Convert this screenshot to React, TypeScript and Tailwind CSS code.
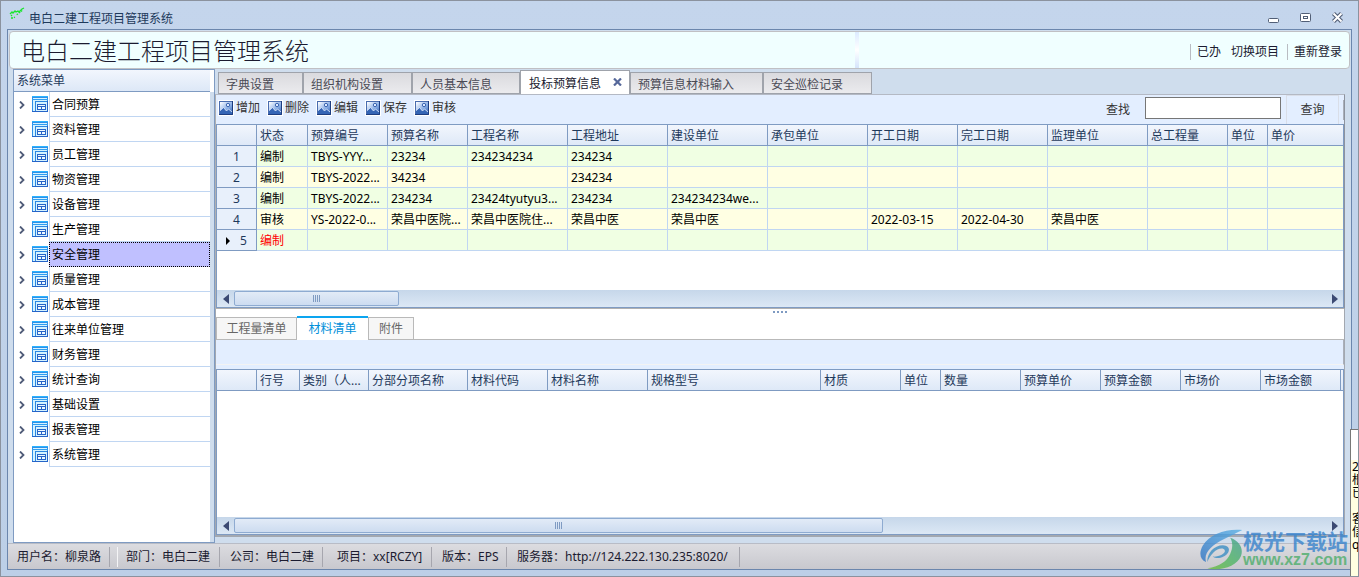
import React from "react";

type Col = { name: string; width: string };

const menu = [
  "合同预算", "资料管理", "员工管理", "物资管理", "设备管理", "生产管理", "安全管理", "质量管理",
  "成本管理", "往来单位管理", "财务管理", "统计查询", "基础设置", "报表管理", "系统管理",
];

const tabs = [
  { name: "字典设置", width: "w-[85px]" },
  { name: "组织机构设置", width: "w-[109px]" },
  { name: "人员基本信息", width: "w-[108px]" },
  { name: "投标预算信息", width: "w-[110px]", active: true },
  { name: "预算信息材料输入", width: "w-[133px]" },
  { name: "安全巡检记录", width: "w-[109px]" },
];

const actions = ["增加", "删除", "编辑", "保存", "审核"];

const budgetCols: Col[] = [
  { name: "", width: "w-10" },
  { name: "状态", width: "w-[51px]" },
  { name: "预算编号", width: "w-20" },
  { name: "预算名称", width: "w-20" },
  { name: "工程名称", width: "w-[100px]" },
  { name: "工程地址", width: "w-[100px]" },
  { name: "建设单位", width: "w-[100px]" },
  { name: "承包单位", width: "w-[100px]" },
  { name: "开工日期", width: "w-[90px]" },
  { name: "完工日期", width: "w-[90px]" },
  { name: "监理单位", width: "w-[100px]" },
  { name: "总工程量", width: "w-20" },
  { name: "单位", width: "w-10" },
  { name: "单价", width: "w-auto" },
];

const budgetRows: string[][] = [
  ["编制", "TBYS-YYY...", "23234", "234234234", "234234", "", "", "", "", "", "", "", ""],
  ["编制", "TBYS-2022...", "34234", "", "234234", "", "", "", "", "", "", "", ""],
  ["编制", "TBYS-2022...", "234234", "23424tyutyu3...", "234234", "234234234we...", "", "", "", "", "", "", ""],
  ["审核", "YS-2022-0...", "荣昌中医院...", "荣昌中医院住...", "荣昌中医", "荣昌中医", "", "2022-03-15", "2022-04-30", "荣昌中医", "", "", ""],
  ["编制", "", "", "", "", "", "", "", "", "", "", "", ""],
];

const materialCols: Col[] = [
  { name: "", width: "w-10" },
  { name: "行号", width: "w-[43px]" },
  { name: "类别（人...", width: "w-[69px]" },
  { name: "分部分项名称", width: "w-[99px]" },
  { name: "材料代码", width: "w-20" },
  { name: "材料名称", width: "w-[100px]" },
  { name: "规格型号", width: "w-[173px]" },
  { name: "材质", width: "w-20" },
  { name: "单位", width: "w-10" },
  { name: "数量", width: "w-20" },
  { name: "预算单价", width: "w-20" },
  { name: "预算金额", width: "w-20" },
  { name: "市场价", width: "w-20" },
  { name: "市场金额", width: "w-20" },
  { name: "", width: "w-auto" },
];

function MenuIcon() {
  return (
    <svg className="block" width="16" height="16" viewBox="0 0 16 16" shapeRendering="crispEdges" aria-hidden="true">
      <rect x="0" y="0" width="16" height="16" fill="#2f8fe8" />
      <rect x="1" y="2" width="14" height="13" fill="#d5f3ff" />
      <rect x="0" y="0" width="16" height="1" fill="#29b4ff" />
      <rect x="0" y="3" width="16" height="1" fill="#2f9df0" />
      <rect x="3" y="5" width="13" height="11" fill="#2c86e0" />
      <rect x="4" y="6" width="11" height="9" fill="#d5f3ff" />
      <rect x="5" y="8" width="9" height="6" fill="#2664c8" />
      <rect x="6" y="9" width="7" height="1" fill="#eef9ff" />
      <rect x="6" y="11" width="3" height="2" fill="#eef9ff" />
      <rect x="10" y="11" width="3" height="2" fill="#eef9ff" />
      <rect x="0" y="15" width="16" height="1" fill="#2664c8" />
      <rect x="15" y="5" width="1" height="11" fill="#2664c8" />
    </svg>
  );
}

function PictureIcon() {
  return (
    <svg className="shrink-0" width="16" height="16" viewBox="0 0 16 16" aria-hidden="true">
      <defs>
        <linearGradient id="sky" x1="0" y1="0" x2="1" y2="1">
          <stop offset="0.1" stopColor="#f4f8ff" />
          <stop offset="0.55" stopColor="#8fb2e6" />
          <stop offset="1" stopColor="#2e5fb4" />
        </linearGradient>
      </defs>
      <rect width="16" height="16" fill="#fff" />
      <rect x="1.5" y="1.5" width="13" height="13" fill="url(#sky)" stroke="#4a6cae" />
      <path d="M2 11L5.500 7.500L8.500 11L10.500 9L14 12V14H2Z" fill="#3565b5" />
      <path d="M2 10.500L5.500 7.500L8.500 11L10.500 9L14 12" fill="none" stroke="#e8f0ff" strokeWidth="0.8" />
      <circle cx="10" cy="5" r="1.700" fill="#dce9ff" stroke="#2f59a8" strokeWidth="0.9" />
      <path d="M14.500 1V14.500H1" fill="none" stroke="#1d3d80" />
    </svg>
  );
}

function HeadRow({ cols }: { cols: Col[] }) {
  return (
    <thead>
      <tr className="h-[21px] bg-linear-to-b from-[#f2f6fd] to-[#dde8f7]">
        {cols.map((c, i) => (
          <th
            key={i}
            className={`${c.width} overflow-hidden border-r border-b border-[#7f9bc2] px-[3px] pt-0.5 text-left font-normal whitespace-nowrap text-[#1e395b] last:border-r-0`}
          >
            {c.name}
          </th>
        ))}
      </tr>
    </thead>
  );
}

function ScrollBar({ thumb }: { thumb: string }) {
  return (
    <div className="flex h-[17px] items-center bg-linear-to-b from-[#c6d7ea] to-[#dce8f5]">
      <button aria-label="向左滚动" className="flex w-[17px] justify-center">
        <svg width="6" height="10" viewBox="0 0 6 10"><path d="M6 0V10L0 5Z" fill="#3c4a73" /></svg>
      </button>
      <div className={`${thumb} flex h-[15px] items-center justify-center gap-px rounded-xs border border-[#8eabd1] bg-linear-to-b from-[#e2ebf7] to-[#cddcf0]`}>
        <i className="h-[7px] w-px bg-[#7f9bc2]" />
        <i className="h-[7px] w-px bg-[#7f9bc2]" />
        <i className="h-[7px] w-px bg-[#7f9bc2]" />
        <i className="h-[7px] w-px bg-[#7f9bc2]" />
      </div>
      <button aria-label="向右滚动" className="ml-auto flex w-[17px] justify-center">
        <svg width="6" height="10" viewBox="0 0 6 10"><path d="M0 0V10L6 5Z" fill="#3c4a73" /></svg>
      </button>
    </div>
  );
}

function TitleBar() {
  return (
    <div className="flex h-[28px] items-center pt-1.5 pr-2 pl-0.5 text-[#1e395b]">
      <svg className="-mt-2" width="16" height="14" viewBox="0 0 16 14" fill="none" stroke="#19e62c" strokeWidth="1.300" aria-hidden="true">
        <path d="M1 7L3 5L4 6L6 4L7 5L9 4L10 5L13 2L15 1" />
        <path d="M10 6L14 3M3 8L2 9M9 7L7 8" strokeDasharray="1.500 1" />
        <path d="M2 11H4L6 10" strokeDasharray="2 1" />
      </svg>
      <span className="ml-1 pt-px">电白二建工程项目管理系统</span>
      <div className="ml-auto flex items-center gap-5">
        <button aria-label="最小化">
          <svg className="block" width="12" height="12" viewBox="0 0 12 12"><rect x="0.500" y="6.500" width="10" height="4" rx="1" fill="#fff" stroke="#515e76" /></svg>
        </button>
        <button aria-label="最大化">
          <svg className="block" width="12" height="12" viewBox="0 0 12 12"><rect x="0.500" y="1.500" width="10" height="8" rx="1" fill="#fff" stroke="#515e76" /><rect x="3.500" y="4.500" width="4" height="2" fill="#fff" stroke="#515e76" /></svg>
        </button>
        <button aria-label="关闭">
          <svg className="block" width="12" height="12" viewBox="0 0 12 12"><path d="M1.500 1.500L9.500 9.500M9.500 1.500L1.500 9.500" stroke="#515e76" strokeWidth="4.200" /><path d="M1.500 1.500L9.500 9.500M9.500 1.500L1.500 9.500" stroke="#fff" strokeWidth="2" /></svg>
        </button>
      </div>
    </div>
  );
}

function Sidebar() {
  return (
    <nav className="ml-[5px] flex w-[202px] shrink-0 flex-col border border-[#7f9bc2] bg-white">
      <div className="mr-1 flex h-[22px] items-center border-b border-[#7f9bc2] bg-linear-to-b from-[#f2f6fd] to-[#dde8f7] pt-px pl-[3px] text-[#1e395b]">
        系统菜单
      </div>
      <ul className="flex-1 border-r-4 border-[#cfdded]">
        {menu.map((m) => {
          const selected = m === "安全管理";
          return (
            <li key={m}>
              <a href="#" className="flex h-[25px] items-center text-black">
                <svg className="ml-[5px]" width="6" height="8" viewBox="0 0 6 8" fill="none" stroke="#4f5b78" strokeWidth="1.800"><path d="M1 0.500L4.500 4L1 7.500" /></svg>
                <span className="ml-[7px] w-[17px] pb-px"><MenuIcon /></span>
                <span
                  className={
                    selected
                      ? "flex h-full flex-1 items-center border border-dotted border-black bg-[#c0c0ff] pt-px pl-0.5"
                      : "flex h-full flex-1 items-center border-b border-l border-[#c0d6f2] pt-0.5 pl-0.5"
                  }
                >
                  {m}
                </span>
              </a>
            </li>
          );
        })}
      </ul>
    </nav>
  );
}

function BudgetPanel() {
  return (
    <section className="border border-t-[#b4b9c4] border-r-[#8d939e] border-b-[#b0b0b0] border-l-[#b0b0b0] bg-white">
      <div className="flex h-[29px] items-center bg-[#e3eeff] pl-0.5 text-[#333]">
        <div className="flex gap-[7px] pb-1">
          {actions.map((a) => (
            <button key={a} className="flex w-[42px] items-center gap-0.5 whitespace-nowrap">
              <PictureIcon />
              {a}
            </button>
          ))}
        </div>
        <label htmlFor="find" className="ml-auto">查找</label>
        <input id="find" className="mb-1 ml-[15px] h-[22px] w-[136px] border border-[#767676] bg-white px-1 outline-none" />
        <button className="ml-[5px] h-full w-[53px] border-x border-t border-[#d9dee8]">查询</button>
        <i className="ml-1 h-5 w-px bg-[#a9afba]" />
      </div>
      <div className="border border-[#7f9bc2]">
        <div className="pb-[39px]">
          <table className="w-full table-fixed border-separate border-spacing-0">
            <HeadRow cols={budgetCols} />
            <tbody>
              {budgetRows.map((row, r) => (
                <tr key={r} className="h-[21px] odd:bg-[#f0ffe3] even:bg-[#ffffe3]">
                  <th scope="row" className="border-r border-b border-[#7f9bc2] bg-[#e8f0fb] px-0 pt-0.5 font-normal text-[#1e395b]">
                    <span className="flex items-center justify-center gap-2.5">
                      {r === 4 && <svg width="4" height="8" viewBox="0 0 4 8"><path d="M0 0V8L4 4Z" fill="#000" /></svg>}
                      {r + 1}
                    </span>
                  </th>
                  {row.map((cell, c) => (
                    <td
                      key={c}
                      className={`overflow-hidden border-r border-b border-[#c0d6f2] px-[3px] pt-0.5 whitespace-nowrap last:border-r-0 ${r === 4 ? "text-[#ff0000]" : "text-black"}`}
                    >
                      {cell}
                    </td>
                  ))}
                </tr>
              ))}
            </tbody>
          </table>
        </div>
        <ScrollBar thumb="w-[165px]" />
      </div>
    </section>
  );
}

function DetailPanel() {
  return (
    <section className="flex flex-1 flex-col border-r border-b-2 border-l border-[#a3a8b0] bg-white">
      <div className="flex h-[7px] items-start justify-center gap-0.5 pt-0.5">
        <i className="size-0.5 bg-[#7f9bc2]" />
        <i className="size-0.5 bg-[#7f9bc2]" />
        <i className="size-0.5 bg-[#7f9bc2]" />
        <i className="size-0.5 bg-[#7f9bc2]" />
      </div>
      <div role="tablist" className="flex h-6 items-end border-b border-[#b9b9b9] text-[#666]">
        <button role="tab" className="h-[22px] w-[81px] border border-b-0 border-[#b9b9b9] bg-[#f6f6f6] pt-px">工程量清单</button>
        <button role="tab" aria-selected="true" className="-mb-px h-6 w-[71px] border-t-2 border-[#0ca5f0] bg-white text-[#0090da]">材料清单</button>
        <button role="tab" className="h-[22px] w-[46px] border border-b-0 border-[#b9b9b9] bg-[#f6f6f6] pt-px">附件</button>
      </div>
      <div className="h-[29px] border-b-4 border-[#e3eeff] bg-[#e3eeff]">
        <div className="h-full border-r border-b border-[#f3f3f3] border-r-[#a9afba]" />
      </div>
      <div className="flex flex-1 flex-col border border-[#7f9bc2]">
        <div className="flex-1">
          <table className="w-full table-fixed border-separate border-spacing-0">
            <HeadRow cols={materialCols} />
          </table>
        </div>
        <ScrollBar thumb="w-[649px]" />
      </div>
    </section>
  );
}

function StatusItem({ children, className }: { children: React.ReactNode; className: string }) {
  return <span className={`${className} flex h-5 items-center border-r border-r-[#a6a6ae] whitespace-nowrap`}>{children}</span>;
}

function Watermark() {
  return (
    <div className="pointer-events-none absolute right-[10px] bottom-1.5 flex items-center opacity-80">
      <svg width="43" height="41" viewBox="28 80 128 122" aria-hidden="true">
        <defs>
          <linearGradient id="leaf" x1="1" y1="0" x2="0" y2="1">
            <stop offset="0" stopColor="#43a08f" />
            <stop offset="0.500" stopColor="#4fb567" />
            <stop offset="1" stopColor="#6cbf3c" />
          </linearGradient>
          <linearGradient id="sweep" x1="1" y1="0" x2="0" y2="1">
            <stop offset="0" stopColor="#5ab0e4" />
            <stop offset="1" stopColor="#2f74c4" />
          </linearGradient>
        </defs>
        <path d="M154 83C108 78 58 94 36 130C24 152 28 172 46 178C38 152 62 128 100 110C116 102 132 94 154 83Z" fill="url(#sweep)" />
        <path d="M118 106C146 116 158 138 150 160C138 190 92 206 50 197C88 192 108 176 118 154C126 136 126 120 118 106Z" fill="url(#leaf)" />
        <path d="M50 178C48 152 70 128 96 128C122 130 118 152 98 162C86 168 74 168 66 162C82 164 104 154 102 144C98 134 80 138 68 150C58 160 54 168 50 178Z" fill="#3c8fc4" />
      </svg>
      <div className="flex flex-col">
        <span className="font-['Noto_Sans_CJK_SC',sans-serif] text-[21px] leading-[20px] font-bold text-[#3a84cc]">极光下载站</span>
        <span className="font-['Liberation_Sans',sans-serif] text-[16px] leading-[20px] font-bold text-[#4fae6c]">www.xz7.com</span>
      </div>
    </div>
  );
}

function EdgeNote() {
  return (
    <div className="absolute right-0 bottom-0 h-[147px] w-2 overflow-hidden border-t border-l border-[#777] bg-[#ffffe1] text-black">
      <div className="h-[30px] bg-white" />
      <p className="w-20 pl-px text-[12px] leading-[13px]">
        2022<br />根据<br />已办<br /><br />客户<br />信息<br />qq
      </p>
    </div>
  );
}

export default function App() {
  return (
    <div className="relative flex min-h-screen flex-col overflow-hidden border border-[#8b929e] bg-linear-to-b from-[#c4d5ec] to-[#bccfe7] px-1.5 pb-1.5 font-['Noto_Sans','Noto_Sans_CJK_SC',sans-serif] text-[12px] leading-[16px]">
      <TitleBar />
      <div className="flex flex-1 flex-col border border-[#6b86ad] bg-[#cfdded]">
        <header className="mx-px mt-px flex h-[38px] items-center rounded-sm border border-[#c0c0c4] bg-[#f0ffff] pr-[7px] pl-[11px]">
          <h1 className="font-['Noto_Sans_CJK_SC',sans-serif] text-[24px] leading-[36px] font-light text-[#1b1b30]">电白二建工程项目管理系统</h1>
          <i className="ml-[546px] h-full w-1 bg-linear-to-b from-[#dcebff] via-white to-[#d5e4fb]" />
          <div className="ml-auto flex items-center pt-[3px] text-[#1b1b30]">
            <a href="#" className="border-l border-[#b9bcc2] pl-1.5">已办</a>
            <a href="#" className="ml-[10px]">切换项目</a>
            <a href="#" className="ml-2 border-l border-[#b9bcc2] pl-1.5">重新登录</a>
          </div>
        </header>
        <div className="flex flex-1">
          <Sidebar />
          <main className="flex min-w-0 flex-1 flex-col pr-1.5 pb-1.5">
            <div role="tablist" className="flex h-[25px] items-end pl-[3px]">
              {tabs.map((t) =>
                t.active ? (
                  <button key={t.name} role="tab" aria-selected="true" className={`${t.width} flex h-6 items-center border border-b-0 border-[#9fa3ab] bg-white pt-0.5 pl-2 text-[#1b1b30]`}>
                    {t.name}
                    <svg className="-mt-1 ml-3" width="9" height="8" viewBox="0 0 9 8" stroke="#56689a" strokeWidth="2.200"><path d="M1 0.500L8 7.500M8 0.500L1 7.500" /></svg>
                  </button>
                ) : (
                  <button key={t.name} role="tab" className={`${t.width} h-[22px] border border-[#9fa3ab] bg-linear-to-b from-[#dadade] to-[#ebebee] pt-[3px] pl-[7px] text-left text-[#4a4a55]`}>
                    {t.name}
                  </button>
                ),
              )}
            </div>
            <BudgetPanel />
            <DetailPanel />
          </main>
        </div>
        <footer className="flex h-[26px] items-center border-t border-[#b8bcc6] bg-linear-to-b from-[#dcdce0] to-[#c8c8ce] pl-[9px] text-[#1b1b30]">
          <StatusItem className="w-[93px]">用户名：柳泉路</StatusItem>
          <StatusItem className="ml-[7px] w-[103px] border-l border-l-[#f4f4f6] pl-2">部门：电白二建</StatusItem>
          <StatusItem className="w-[103px] pl-[10px]">公司：电白二建</StatusItem>
          <StatusItem className="w-[109px] pl-[14px]">项目：xx[RCZY]</StatusItem>
          <StatusItem className="w-[75px] pl-[10px]">版本：EPS</StatusItem>
          <StatusItem className="w-[233px] pl-[10px]">服务器：http://124.222.130.235:8020/</StatusItem>
        </footer>
      </div>
      <EdgeNote />
      <Watermark />
    </div>
  );
}
